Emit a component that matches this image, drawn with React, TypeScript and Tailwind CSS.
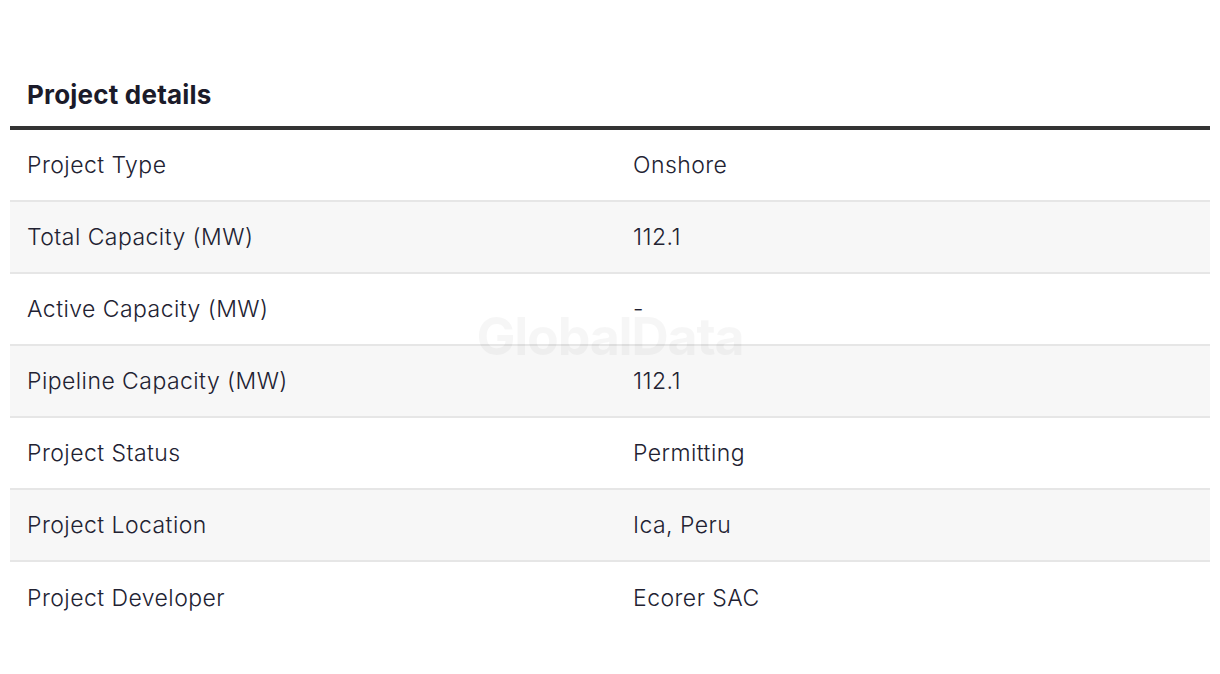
const rows: [string, string][] = [
  ['Project Type', 'Onshore'],
  ['Total Capacity (MW)', '112.1'],
  ['Active Capacity (MW)', '-'],
  ['Pipeline Capacity (MW)', '112.1'],
  ['Project Status', 'Permitting'],
  ['Project Location', 'Ica, Peru'],
  ['Project Developer', 'Ecorer SAC'],
];

export default function App() {
  return (
    <div className="min-h-[674px] bg-white px-[10px] pt-[79px] font-['Inter',sans-serif] text-[#222232]">
      <h2 className="px-[17px] text-[26px] font-bold leading-[32px] tracking-[0.2px] text-[#1b1b2a]">Project details</h2>
      <div className="relative mt-[15px] border-t-4 border-[#333333]">
        {rows.map(([label, value], i) => (
          <div
            key={label}
            className={`grid h-[72px] grid-cols-[606px_1fr] items-center text-[23px] font-light tracking-[0.45px] ${
              i % 2 === 1 ? 'bg-[#f7f7f7]' : 'bg-white'
            } ${i < rows.length - 1 ? 'border-b-2 border-[#e6e6e6]' : ''}`}
          >
            <div className="px-[17px]">{label}</div>
            <div className="px-[17px]">{value}</div>
          </div>
        ))}
        <div className="pointer-events-none absolute left-0 right-0 top-[181px] flex justify-center">
          <span className="text-[52px] font-bold leading-none tracking-tight text-black/[0.035]">GlobalData</span>
        </div>
      </div>
    </div>
  );
}
